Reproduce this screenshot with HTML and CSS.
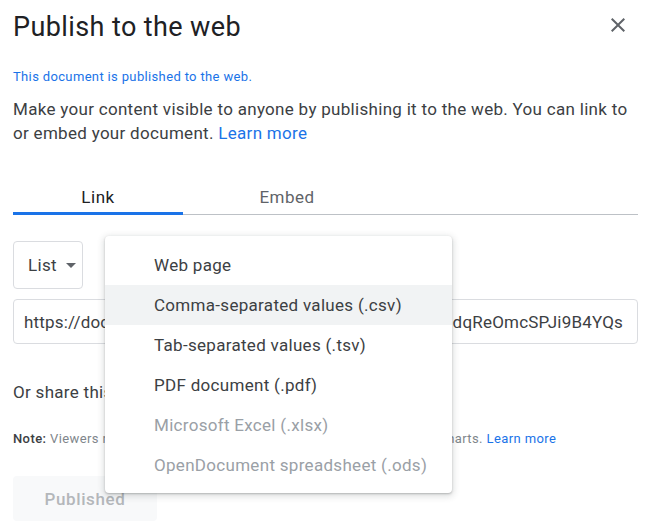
FILE: index.html
```html
<!DOCTYPE html>
<html lang="en">
<head>
<meta charset="utf-8">
<title>Publish to the web</title>
<link rel="stylesheet" href="styles.css">
</head>
<body>
<div class="dialog">
  <header class="dialog-header">
    <h1 class="dialog-title">Publish to the web</h1>
    <button class="close-btn" aria-label="Close">
      <svg viewBox="0 0 24 24" width="24" height="24"><path d="M19 6.41L17.59 5 12 10.59 6.41 5 5 6.41 10.59 12 5 17.59 6.41 19 12 13.41 17.59 19 19 17.59 13.41 12z" fill="currentColor"/></svg>
    </button>
  </header>

  <p class="status">This document is published to the web.</p>
  <p class="intro">Make your content visible to anyone by publishing it to the web. You can link to or embed your document. <a href="#" class="link">Learn more</a></p>

  <nav class="tabs">
    <div class="tab tab-active">Link</div>
    <div class="tab tab-embed">Embed</div>
  </nav>

  <div class="select">
    <span class="select-label">List</span>
    <span class="select-arrow"></span>
  </div>

  <input class="url-field" readonly value="https://docs.google.com/spreadsheets/d/e/2PACX-1v6dqReOmcSPJi9B4YQs">

  <p class="share">Or share this link via email or social media</p>

  <p class="note"><b>Note:</b> Viewers receive a full copy of the data shown in your published charts. <a href="#" class="link">Learn more</a></p>

  <button class="publish-btn" disabled>Published</button>

  <ul class="menu">
    <li class="menu-item">Web page</li>
    <li class="menu-item menu-item-hover">Comma-separated values (.csv)</li>
    <li class="menu-item">Tab-separated values (.tsv)</li>
    <li class="menu-item">PDF document (.pdf)</li>
    <li class="menu-item menu-item-disabled">Microsoft Excel (.xlsx)</li>
    <li class="menu-item menu-item-disabled">OpenDocument spreadsheet (.ods)</li>
  </ul>
</div>
</body>
</html>
```

FILE: styles.css
```css
* { box-sizing: border-box; }

html, body {
  margin: 0;
  padding: 0;
  background: #fff;
}

body {
  font-family: Roboto, "Liberation Sans", Arial, sans-serif;
  color: #3c4043;
  width: 663px;
  height: 526px;
  overflow: hidden;
}

.dialog {
  position: relative;
  padding: 0 25px 0 13px;
}

.dialog-header {
  display: flex;
  justify-content: space-between;
  align-items: flex-start;
  padding-top: 11px;
}

.dialog-title {
  margin: 0;
  font-size: 27px;
  line-height: 32px;
  font-weight: 400;
  letter-spacing: 0.4px;
  color: #202124;
}

.close-btn {
  margin: 2px 8px 0 0;
  padding: 0;
  border: 0;
  background: none;
  width: 24px;
  height: 24px;
  color: #5f6368;
  display: flex;
}

.status {
  margin: 24px 0 0;
  font-size: 13px;
  line-height: 20px;
  letter-spacing: 0.35px;
  color: #1a73e8;
}

.intro {
  margin: 10px 0 0;
  font-size: 17px;
  line-height: 24px;
  letter-spacing: 0.3px;
  width: 628px;
}

.link {
  color: #1a73e8;
  text-decoration: none;
}

.tabs {
  display: flex;
  margin-top: 30px;
  border-bottom: 1px solid #bdc1c6;
}

.tab {
  font-size: 17px;
  line-height: 20px;
  font-weight: 400;
  letter-spacing: 0.5px;
  text-align: center;
  padding: 12px 0 5px;
  border-bottom: 3px solid transparent;
  margin-bottom: -1px;
  color: #5f6368;
}

.tab-active {
  width: 170px;
  color: #202124;
  border-bottom-color: #1a73e8;
}

.tab-embed {
  width: 208px;
}

.select {
  margin-top: 26px;
  width: 70px;
  height: 48px;
  border: 1px solid #dadce0;
  border-radius: 4px;
  display: flex;
  align-items: center;
  padding-left: 14px;
  font-size: 17px;
  letter-spacing: 0.3px;
  color: #3c4043;
}

.select-arrow {
  margin-left: 9px;
  width: 0;
  height: 0;
  border-left: 5px solid transparent;
  border-right: 5px solid transparent;
  border-top: 5px solid #5f6368;
}

.url-field {
  display: block;
  margin-top: 10px;
  width: 625px;
  height: 45px;
  border: 1px solid #dadce0;
  border-radius: 4px;
  padding: 0 10px;
  font-family: Roboto, "Liberation Sans", Arial, sans-serif;
  font-size: 17px;
  letter-spacing: 0.2px;
  color: #3c4043;
  background: #fff;
  outline: none;
}

.share {
  margin: 36px 0 0;
  font-size: 17px;
  line-height: 24px;
  letter-spacing: 0.3px;
}

.note {
  margin: 27px 0 0;
  font-size: 13px;
  line-height: 16px;
  letter-spacing: 0.4px;
  color: #80868b;
}

.note b {
  font-weight: 500;
  color: #3c4043;
}

.publish-btn {
  display: block;
  margin-top: 29px;
  width: 144px;
  height: 45px;
  border: 0;
  border-radius: 4px;
  background: #f8f9fa;
  color: #b4b7ba;
  font-family: Roboto, "Liberation Sans", Arial, sans-serif;
  font-size: 17px;
  font-weight: 500;
  letter-spacing: 0.6px;
}

.menu {
  position: absolute;
  left: 105px;
  top: 236px;
  width: 347px;
  margin: 0;
  padding: 9px 0 8px;
  list-style: none;
  background: #fff;
  border-radius: 4px;
  box-shadow: 0 2px 6px 2px rgba(60, 64, 67, 0.15), 0 1px 2px 0 rgba(60, 64, 67, 0.3);
}

.menu-item {
  height: 40px;
  line-height: 40px;
  padding-left: 49px;
  font-size: 17px;
  letter-spacing: 0.3px;
  color: #3c4043;
}

.menu-item-hover {
  background: #f1f3f4;
}

.menu-item-disabled {
  color: #9aa0a6;
}
```
